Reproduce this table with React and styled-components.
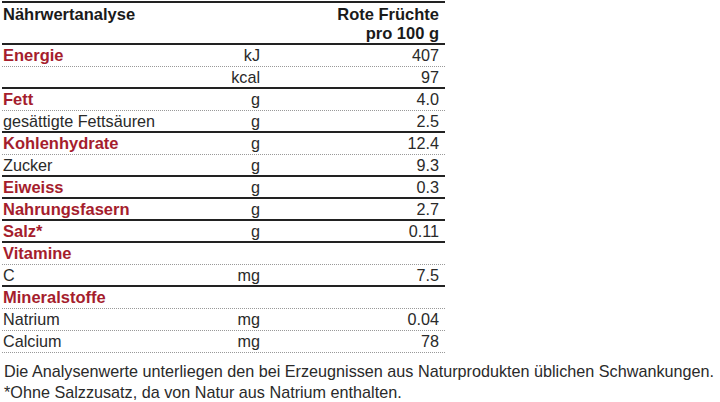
import React from 'react'
import styled, { createGlobalStyle } from 'styled-components';

const GlobalStyle = createGlobalStyle`
    body{
        margin: 0;
        background: #fff;
        font-family: "Liberation Sans", Arial, sans-serif;
        color: #222;
    }
`;

const rows = [
    { label: 'Energie', unit: 'kJ', value: '407', head: true, line: 'dot' },
    { label: '', unit: 'kcal', value: '97', line: 'solid' },
    { label: 'Fett', unit: 'g', value: '4.0', head: true, line: 'dot' },
    { label: 'gesättigte Fettsäuren', unit: 'g', value: '2.5', line: 'solid' },
    { label: 'Kohlenhydrate', unit: 'g', value: '12.4', head: true, line: 'dot' },
    { label: 'Zucker', unit: 'g', value: '9.3', line: 'solid' },
    { label: 'Eiweiss', unit: 'g', value: '0.3', head: true, line: 'solid' },
    { label: 'Nahrungsfasern', unit: 'g', value: '2.7', head: true, line: 'solid' },
    { label: 'Salz*', unit: 'g', value: '0.11', head: true, line: 'solid' },
    { label: 'Vitamine', unit: '', value: '', head: true, line: 'dot' },
    { label: 'C', unit: 'mg', value: '7.5', line: 'solid' },
    { label: 'Mineralstoffe', unit: '', value: '', head: true, line: 'dot' },
    { label: 'Natrium', unit: 'mg', value: '0.04', line: 'dot' },
    { label: 'Calcium', unit: 'mg', value: '78', line: 'dot' },
];

const App = () => {
    return (
        <Page>
            <GlobalStyle />
            <Table>
                <Header>
                    <HeadTitle>Nährwertanalyse</HeadTitle>
                    <HeadProduct>Rote Früchte<br />pro 100 g</HeadProduct>
                </Header>
                {rows.map((r, i) => (
                    <Row key={i} $line={r.line}>
                        <Label $head={r.head}>{r.label}</Label>
                        <Unit>{r.unit}</Unit>
                        <Value>{r.value}</Value>
                    </Row>
                ))}
            </Table>
            <Notes>
                <p>Die Analysenwerte unterliegen den bei Erzeugnissen aus Naturprodukten üblichen Schwankungen.</p>
                <p>*Ohne Salzzusatz, da von Natur aus Natrium enthalten.</p>
            </Notes>
        </Page>
    )
}

const Page = styled.div`
    width: 720px;
    padding: 0 0 0 2px;
    box-sizing: border-box;
`;

const Table = styled.div`
    width: 443px;
    border-top: 2px solid #222;
    margin-top: 1px;
`;

const Header = styled.div`
    display: flex;
    justify-content: space-between;
    align-items: flex-start;
    height: 42px;
    box-sizing: border-box;
    padding: 2px 6px 0 1px;
    border-bottom: 2px solid #222;
    font-size: 16.5px;
    font-weight: 700;
    line-height: 19px;
    color: #1a1a1a;
`;

const HeadTitle = styled.div``;

const HeadProduct = styled.div`
    text-align: right;
`;

const Row = styled.div`
    display: grid;
    grid-template-columns: 1fr 60px 179px;
    height: 22px;
    box-sizing: border-box;
    align-items: center;
    padding: 0 6px 0 1px;
    font-size: 16.2px;
    border-bottom: ${p => p.$line === 'solid' ? '2px solid #222' : '1px dotted #999'};
`;

const Label = styled.div`
    color: ${p => p.$head ? '#a51d2d' : '#2a2a2a'};
    font-weight: ${p => p.$head ? 700 : 400};
    font-size: ${p => p.$head ? '16.5px' : '16.2px'};
    white-space: nowrap;
`;

const Unit = styled.div`
    text-align: right;
    color: #2a2a2a;
`;

const Value = styled.div`
    text-align: right;
    color: #2a2a2a;
`;

const Notes = styled.div`
    margin-top: 8px;
    padding-left: 2px;
    p{
        margin: 0;
        font-size: 16.2px;
        line-height: 21px;
        color: #2a2a2a;
        white-space: nowrap;
    }
`;

export default App;
